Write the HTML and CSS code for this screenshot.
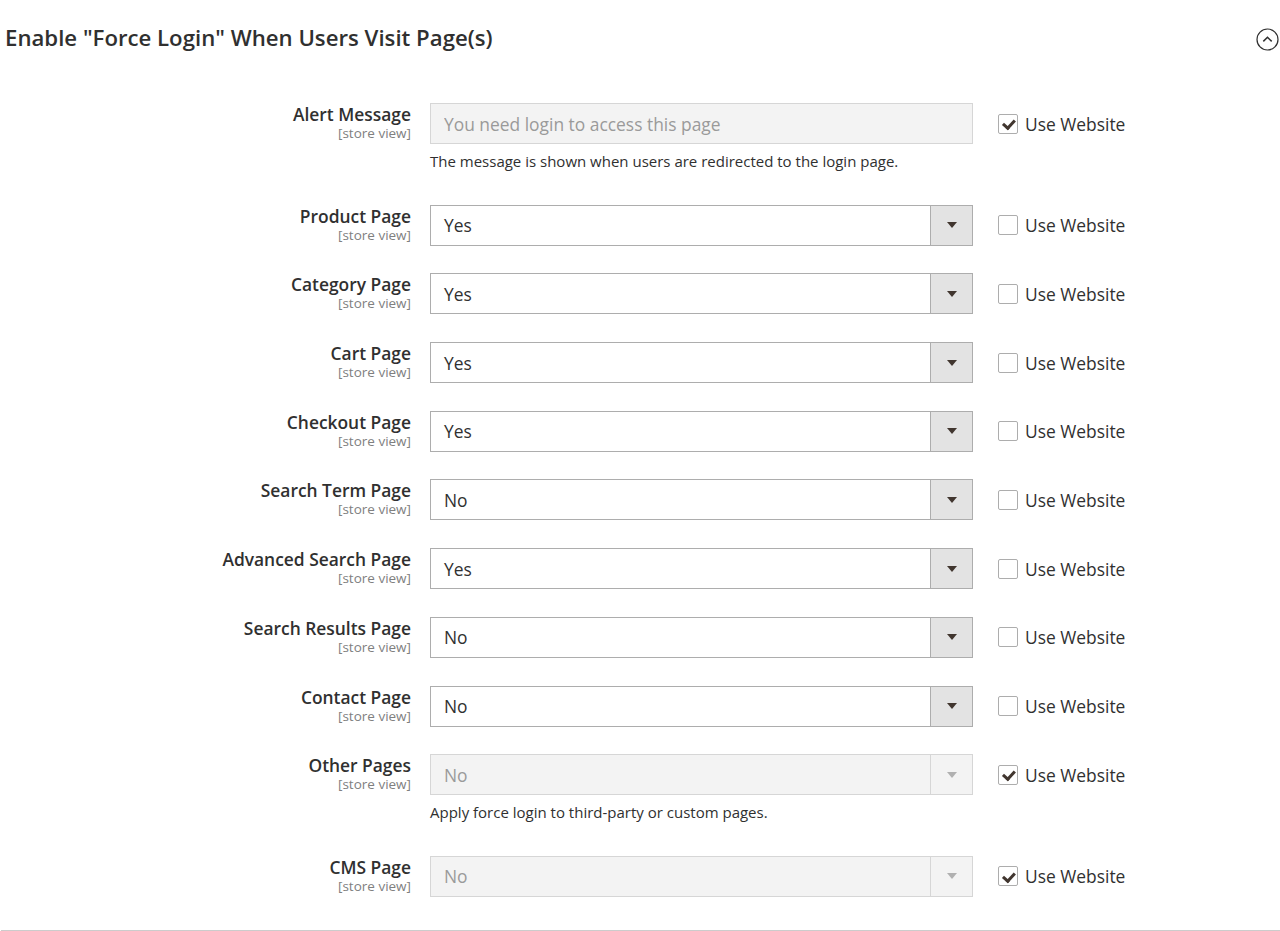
FILE: index.html
```html
<!DOCTYPE html>
<html>
<head>
<meta charset="utf-8">
<title>Force Login</title>
<link rel="stylesheet" href="styles.css">
</head>
<body>
<div class="page">
  <div class="section-head">
    <h2 class="section-title">Enable "Force Login" When Users Visit Page(s)</h2>
    <span class="collapse">
      <svg width="23" height="23" viewBox="0 0 23 23"><circle cx="11.5" cy="11.5" r="10.5" fill="none" stroke="#303030" stroke-width="1.2"/><path d="M7.3 13.4 L11.5 9.3 L15.7 13.4" fill="none" stroke="#303030" stroke-width="1.5"/></svg>
    </span>
  </div>

  <div class="form">
    <div class="row">
      <div class="label"><span class="name">Alert Message</span><span class="scope">[store view]</span></div>
      <div class="control"><input class="input" type="text" disabled value="You need login to access this page"></div>
      <label class="use"><span class="cb checked"></span>Use Website</label>
      <div class="note">The message is shown when users are redirected to the login page.</div>
    </div>

    <div class="row">
      <div class="label"><span class="name">Product Page</span><span class="scope">[store view]</span></div>
      <div class="control"><div class="select"><span class="value">Yes</span><span class="arrow"></span></div></div>
      <label class="use"><span class="cb"></span>Use Website</label>
    </div>

    <div class="row">
      <div class="label"><span class="name">Category Page</span><span class="scope">[store view]</span></div>
      <div class="control"><div class="select"><span class="value">Yes</span><span class="arrow"></span></div></div>
      <label class="use"><span class="cb"></span>Use Website</label>
    </div>

    <div class="row">
      <div class="label"><span class="name">Cart Page</span><span class="scope">[store view]</span></div>
      <div class="control"><div class="select"><span class="value">Yes</span><span class="arrow"></span></div></div>
      <label class="use"><span class="cb"></span>Use Website</label>
    </div>

    <div class="row">
      <div class="label"><span class="name">Checkout Page</span><span class="scope">[store view]</span></div>
      <div class="control"><div class="select"><span class="value">Yes</span><span class="arrow"></span></div></div>
      <label class="use"><span class="cb"></span>Use Website</label>
    </div>

    <div class="row">
      <div class="label"><span class="name">Search Term Page</span><span class="scope">[store view]</span></div>
      <div class="control"><div class="select"><span class="value">No</span><span class="arrow"></span></div></div>
      <label class="use"><span class="cb"></span>Use Website</label>
    </div>

    <div class="row">
      <div class="label"><span class="name">Advanced Search Page</span><span class="scope">[store view]</span></div>
      <div class="control"><div class="select"><span class="value">Yes</span><span class="arrow"></span></div></div>
      <label class="use"><span class="cb"></span>Use Website</label>
    </div>

    <div class="row">
      <div class="label"><span class="name">Search Results Page</span><span class="scope">[store view]</span></div>
      <div class="control"><div class="select"><span class="value">No</span><span class="arrow"></span></div></div>
      <label class="use"><span class="cb"></span>Use Website</label>
    </div>

    <div class="row">
      <div class="label"><span class="name">Contact Page</span><span class="scope">[store view]</span></div>
      <div class="control"><div class="select"><span class="value">No</span><span class="arrow"></span></div></div>
      <label class="use"><span class="cb"></span>Use Website</label>
    </div>

    <div class="row">
      <div class="label"><span class="name">Other Pages</span><span class="scope">[store view]</span></div>
      <div class="control"><div class="select disabled"><span class="value">No</span><span class="arrow"></span></div></div>
      <label class="use"><span class="cb checked"></span>Use Website</label>
      <div class="note">Apply force login to third-party or custom pages.</div>
    </div>

    <div class="row">
      <div class="label"><span class="name">CMS Page</span><span class="scope">[store view]</span></div>
      <div class="control"><div class="select disabled"><span class="value">No</span><span class="arrow"></span></div></div>
      <label class="use"><span class="cb checked"></span>Use Website</label>
    </div>
  </div>
  <div class="divider"></div>
</div>
</body>
</html>
```

FILE: styles.css
```css
html, body {
  margin: 0;
  padding: 0;
  background: #ffffff;
}
body {
  font-family: "Open Sans", "Liberation Sans", sans-serif;
  color: #303030;
  height: 931px;
  overflow: hidden;
}
.page {
  padding-top: 24px;
}
.section-head {
  display: flex;
  align-items: center;
  justify-content: space-between;
  padding: 0 1px 0 5px;
  height: 28px;
  margin-bottom: 51px;
}
.section-title {
  margin: 0;
  font-size: 22.2px;
  line-height: 28px;
  font-weight: 600;
  color: #303030;
}
.collapse {
  display: flex;
  width: 23px;
  height: 23px;
  margin-top: 2px;
}
.form {
  display: flex;
  flex-direction: column;
}
.row {
  display: grid;
  grid-template-columns: 430px 543px auto;
  grid-template-rows: 41px auto;
  margin-bottom: 27.7px;
}
.label {
  grid-column: 1;
  grid-row: 1 / span 2;
  display: flex;
  flex-direction: column;
  align-items: flex-end;
  text-align: right;
  padding-right: 19px;
}
.name {
  font-size: 17.4px;
  line-height: 22px;
  font-weight: 600;
  color: #303030;
}
.scope {
  font-size: 13.5px;
  line-height: 16px;
  color: #808080;
}
.control {
  grid-column: 2;
  grid-row: 1;
  width: 543px;
}
.input {
  box-sizing: border-box;
  width: 543px;
  height: 41px;
  margin: 0;
  padding: 0 13px;
  border: 1px solid #d6d6d6;
  background: #f3f3f3;
  font-family: "Open Sans", "Liberation Sans", sans-serif;
  font-size: 17.4px;
  color: #9a9a9a;
  -webkit-text-fill-color: #9a9a9a;
  opacity: 1;
}
.select {
  box-sizing: border-box;
  height: 41px;
  display: flex;
  align-items: center;
  border: 1px solid #adadad;
  background: #ffffff;
}
.select .value {
  flex: 1;
  padding-left: 13px;
  font-size: 17.4px;
  color: #303030;
}
.select .arrow {
  box-sizing: border-box;
  width: 42px;
  height: 100%;
  background: #e3e3e3;
  border-left: 1px solid #adadad;
  display: flex;
  align-items: center;
  justify-content: center;
}
.select .arrow::after {
  content: "";
  width: 0;
  height: 0;
  border-left: 5px solid transparent;
  border-right: 5px solid transparent;
  border-top: 6px solid #41362f;
}
.select.disabled {
  border-color: #d6d6d6;
  background: #f3f3f3;
}
.select.disabled .value {
  color: #9a9a9a;
}
.select.disabled .arrow {
  background: #f3f3f3;
  border-left-color: #d6d6d6;
}
.select.disabled .arrow::after {
  border-top-color: #b0b0b0;
}
.use {
  grid-column: 3;
  grid-row: 1;
  margin-left: 25px;
  display: flex;
  align-items: center;
  gap: 7px;
  font-size: 17.4px;
  color: #303030;
  white-space: nowrap;
}
.cb {
  box-sizing: border-box;
  width: 20px;
  height: 20px;
  border: 1px solid #adadad;
  border-radius: 2px;
  background: #ffffff;
  position: relative;
  flex: none;
}
.cb.checked::after {
  content: "";
  position: absolute;
  left: 6px;
  top: 2.5px;
  width: 4.5px;
  height: 9px;
  border-right: 3px solid #41362f;
  border-bottom: 3px solid #41362f;
  transform: rotate(42deg);
}
.note {
  grid-column: 2;
  grid-row: 2;
  margin: 7px 0 6px 0;
  font-size: 15px;
  line-height: 20px;
  color: #303030;
  white-space: nowrap;
}
.divider {
  height: 1px;
  background: #cccccc;
  margin: 5px 0 0 1px;
}
```
